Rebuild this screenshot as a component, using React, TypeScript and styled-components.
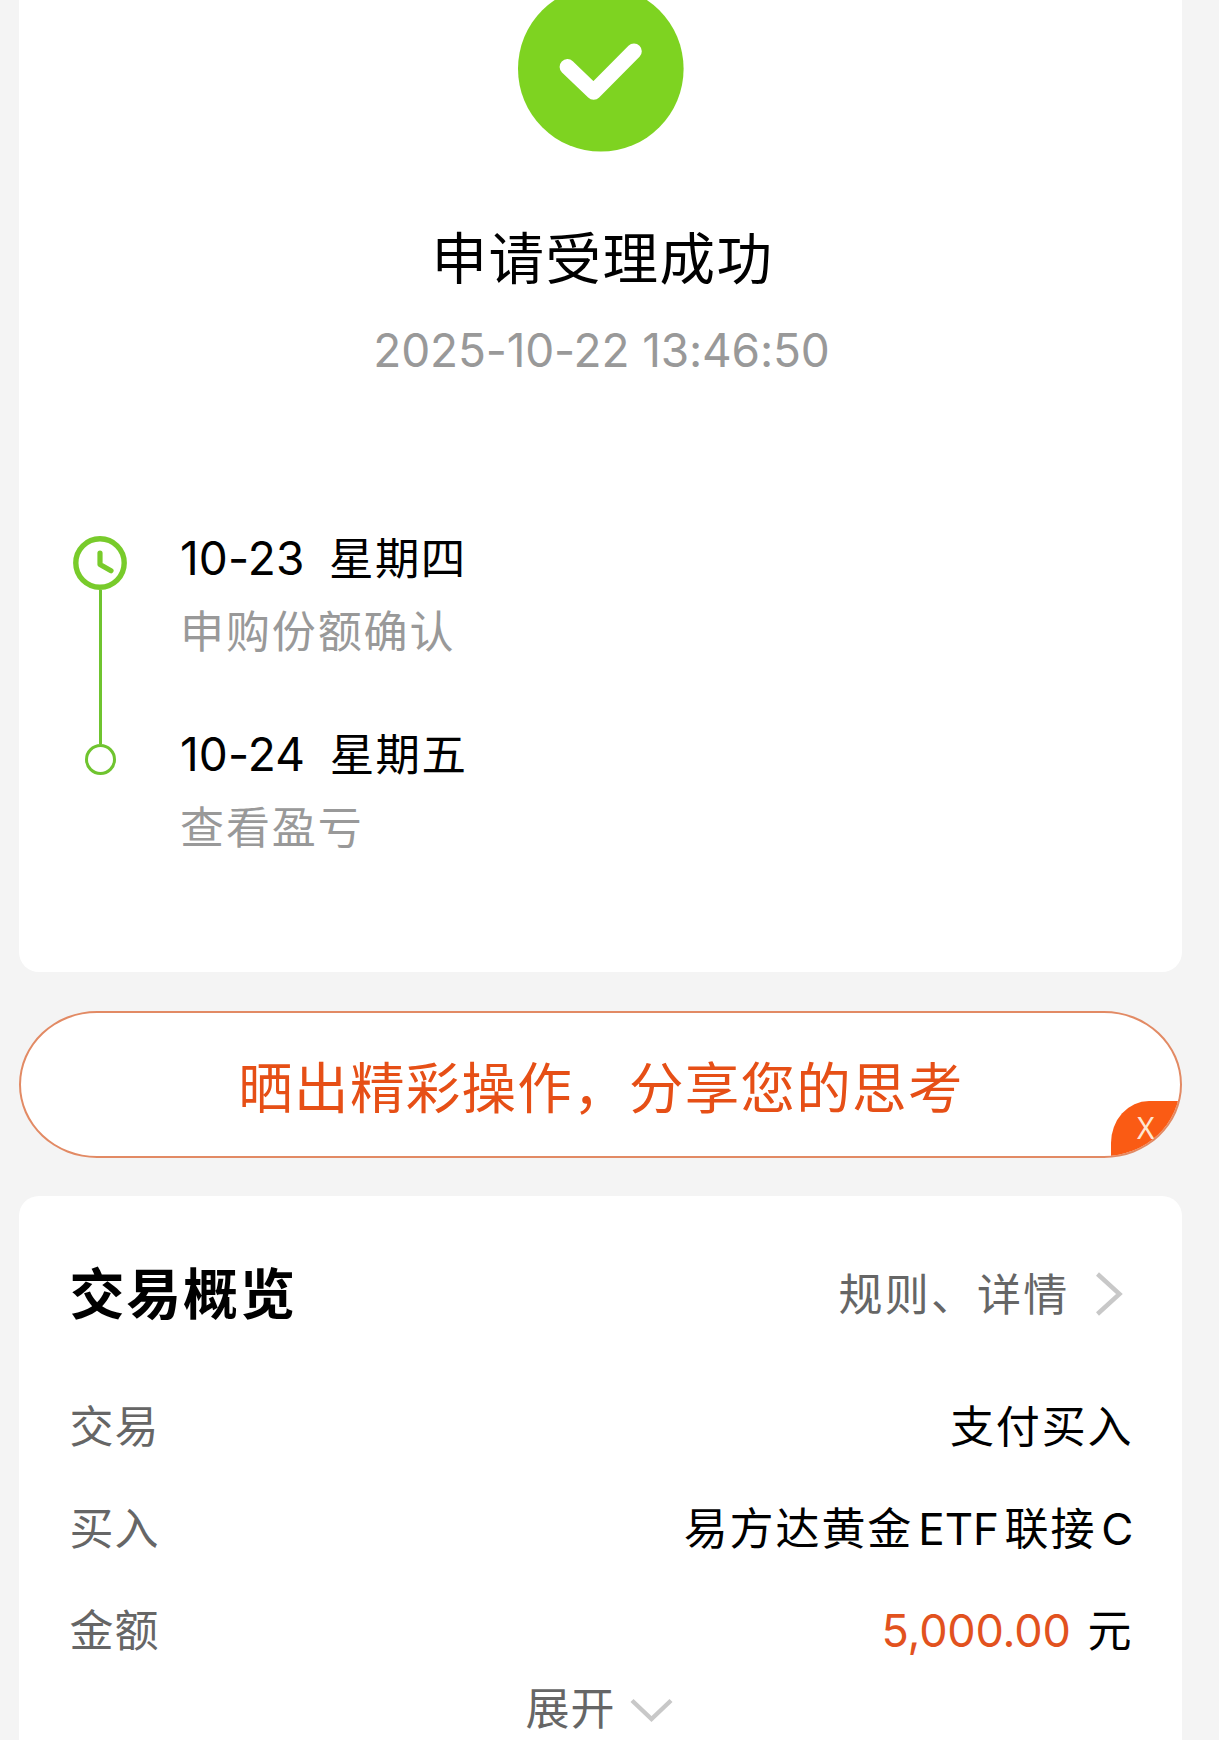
import React from 'react';
import styled, { createGlobalStyle } from 'styled-components';

const GlobalStyle = createGlobalStyle`
  *, *::before, *::after { box-sizing: border-box; }
  html, body { margin: 0; padding: 0; background: #f4f4f4; }
  body {
    font-family: Inter, "Noto Sans CJK SC", sans-serif;
    color: #000;
  }
`;

const Page = styled.main`
  display: flex;
  flex-direction: column;
  width: 1219px;
  height: 1740px;
  padding: 0 37px 0 19px;
  overflow: hidden;
  background: #f4f4f4;
`;

const StatusCard = styled.section`
  flex: none;
  height: 972px;
  background: #fff;
  border-radius: 0 0 20px 20px;
`;

const Hero = styled.header`
  display: flex;
  flex-direction: column;
  align-items: center;
  margin-top: -14px;
`;

const HeroTitle = styled.h1`
  margin: 67px 0 0;
  padding-left: 4px;
  font-size: 55.5px;
  font-weight: 400;
  line-height: 80px;
  letter-spacing: 1.5px;
`;

const HeroTime = styled.time`
  margin-top: 21px;
  padding-left: 2px;
  font-size: 46px;
  line-height: 60px;
  letter-spacing: -0.16px;
  color: #999;
`;

const Timeline = styled.ol`
  margin: 148px 0 0;
  padding: 0 0 0 54px;
  list-style: none;
`;

const Step = styled.li`
  display: grid;
  grid-template-columns: 55px 1fr;
  column-gap: 52px;
  height: 196px;
`;

const Rail = styled.div<{ $offset: number }>`
  display: flex;
  flex-direction: column;
  align-items: center;
  padding-top: ${(p) => p.$offset}px;

  svg { flex: none; display: block; margin-right: 1.5px; }
`;

const RailLine = styled.span<{ $length?: number }>`
  width: 3px;
  flex: ${(p) => (p.$length ? `0 0 ${p.$length}px` : '1')};
  background: #6fc42f;
`;

const Dot = styled.span`
  width: 31px;
  height: 31px;
  border: 3px solid #6fc42f;
  border-radius: 50%;
`;

const StepBody = styled.div`
  padding-top: 1px;
`;

const StepDate = styled.div`
  height: 60px;
  font-size: 44.5px;
  line-height: 60px;
  letter-spacing: 1.4px;
  white-space: nowrap;
`;

const StepDay = styled.span`
  margin-right: 24.5px;
  font-size: 46px;
  line-height: 1;
  letter-spacing: 0.15px;
`;

const StepNote = styled.div`
  margin-top: 13px;
  font-size: 44px;
  line-height: 60px;
  letter-spacing: 1.9px;
  color: #999;
`;

const ShareButton = styled.div`
  position: relative;
  display: flex;
  flex: none;
  align-items: center;
  justify-content: center;
  height: 147px;
  margin-top: 39px;
  padding: 6px 0 0 1px;
  overflow: hidden;
  border: 2px solid #e28a64;
  border-radius: 78px / 73.5px;
  background: #fff;
  font-size: 54.5px;
  line-height: 80px;
  letter-spacing: 1.3px;
  color: #e64f16;
`;

const CloseCorner = styled.button`
  position: absolute;
  right: -1px;
  bottom: -1px;
  display: block;
  width: 70px;
  height: 56px;
  padding: 12px 0 0 26px;
  border: 0;
  border-radius: 38px 0 0 0 / 42px 0 0 0;
  background: #fa5b14;
  color: #fde6d2;
  font-family: "Noto Sans", sans-serif;
  font-size: 30px;
  line-height: 30px;
  text-align: left;
`;

const CloseMark = styled.span`
  display: block;
  height: 44px;
`;

const OverviewCard = styled.section`
  flex: none;
  height: 600px;
  margin-top: 38px;
  padding: 58px 48.5px 0 50.5px;
  background: #fff;
  border-radius: 20px;
`;

const OverviewHeader = styled.header`
  display: flex;
  align-items: center;
  justify-content: space-between;
  height: 80px;
`;

const OverviewTitle = styled.h2`
  margin: 0;
  font-size: 55px;
  font-weight: 700;
  line-height: 80px;
  letter-spacing: 1.8px;
`;

const DetailsLink = styled.a`
  display: flex;
  align-items: center;
  gap: 23px;
  padding: 2px 11px 0 0;
  font-size: 44px;
  line-height: 60px;
  letter-spacing: 2.2px;
  color: #666;

  svg { margin-bottom: 2px; }
`;

const Rows = styled.dl`
  display: flex;
  flex-direction: column;
  gap: 42px;
  margin: 62px 0 0;
`;

const Row = styled.div`
  display: flex;
  justify-content: space-between;
  height: 60px;
  font-size: 44px;
  line-height: 60px;
  letter-spacing: 1.9px;
  white-space: nowrap;
`;

const Label = styled.dt`
  padding-top: 1px;
  letter-spacing: 0.9px;
  color: #666;
`;

const Value = styled.dd`
  margin: 0;
  padding-top: 1px;
`;

const Latin = styled.span<{ $after?: number }>`
  margin: 0 ${(p) => p.$after ?? 0}px 0 5px;
  font-size: 44px;
  line-height: 1;
  letter-spacing: 0;
`;

const Amount = styled.span`
  margin-right: 17px;
  font-size: 45px;
  line-height: 1;
  letter-spacing: -0.2px;
  color: #e2521e;
`;

const Expand = styled.div`
  display: flex;
  align-items: center;
  justify-content: center;
  gap: 13px;
  margin-top: 19px;
  padding-right: 4px;
  font-size: 44px;
  line-height: 60px;
  letter-spacing: 1px;
  color: #666;

  svg { margin-top: 2px; }
`;

const SuccessIcon = () => (
  <svg width="166" height="166" viewBox="0 0 166 166">
    <circle cx="82.8" cy="82.8" r="82.8" fill="#7ed321" />
    <path d="M49.4 80.8 L75.6 106 L116 65.3" fill="none" stroke="#fff" strokeWidth="15.6" strokeLinecap="round" strokeLinejoin="round" />
  </svg>
);

const ClockIcon = () => (
  <svg width="54" height="54" viewBox="0 0 54 54" fill="none" stroke="#78cb2b">
    <circle cx="27" cy="27" r="24.2" strokeWidth="5.4" />
    <path d="M27 17 V28.6 L38 34.8" strokeWidth="5.2" strokeLinecap="round" strokeLinejoin="round" />
  </svg>
);

const ChevronRight = () => (
  <svg width="30" height="46" viewBox="0 0 30 46" fill="none" stroke="#c8c8c8" strokeWidth="4.4">
    <path d="M4.5 3 L26.5 23 L4.5 43" />
  </svg>
);

const ChevronDown = () => (
  <svg width="45" height="28" viewBox="0 0 45 28" fill="none" stroke="#c8c8c8" strokeWidth="4.4">
    <path d="M3 4.5 L22.5 23 L42 4.5" />
  </svg>
);

export default function App() {
  return (
    <>
      <GlobalStyle />
      <Page>
        <StatusCard>
          <Hero>
            <SuccessIcon />
            <HeroTitle>申请受理成功</HeroTitle>
            <HeroTime>2025-10-22 13:46:50</HeroTime>
          </Hero>
          <Timeline>
            <Step>
              <Rail $offset={8}>
                <ClockIcon />
                <RailLine />
              </Rail>
              <StepBody>
                <StepDate><StepDay>10-23</StepDay>星期四</StepDate>
                <StepNote>申购份额确认</StepNote>
              </StepBody>
            </Step>
            <Step>
              <Rail $offset={0}>
                <RailLine $length={20} />
                <Dot />
              </Rail>
              <StepBody>
                <StepDate><StepDay>10-24</StepDay>星期五</StepDate>
                <StepNote>查看盈亏</StepNote>
              </StepBody>
            </Step>
          </Timeline>
        </StatusCard>

        <ShareButton>
          晒出精彩操作，分享您的思考
          <CloseCorner><CloseMark>X</CloseMark></CloseCorner>
        </ShareButton>

        <OverviewCard>
          <OverviewHeader>
            <OverviewTitle>交易概览</OverviewTitle>
            <DetailsLink>规则、详情<ChevronRight /></DetailsLink>
          </OverviewHeader>
          <Rows>
            <Row>
              <Label>交易</Label>
              <Value>支付买入</Value>
            </Row>
            <Row>
              <Label>买入</Label>
              <Value>易方达黄金<Latin $after={5.5}>ETF</Latin>联接<Latin>C</Latin></Value>
            </Row>
            <Row>
              <Label>金额</Label>
              <Value><Amount>5,000.00</Amount>元</Value>
            </Row>
          </Rows>
          <Expand>展开<ChevronDown /></Expand>
        </OverviewCard>
      </Page>
    </>
  );
}
